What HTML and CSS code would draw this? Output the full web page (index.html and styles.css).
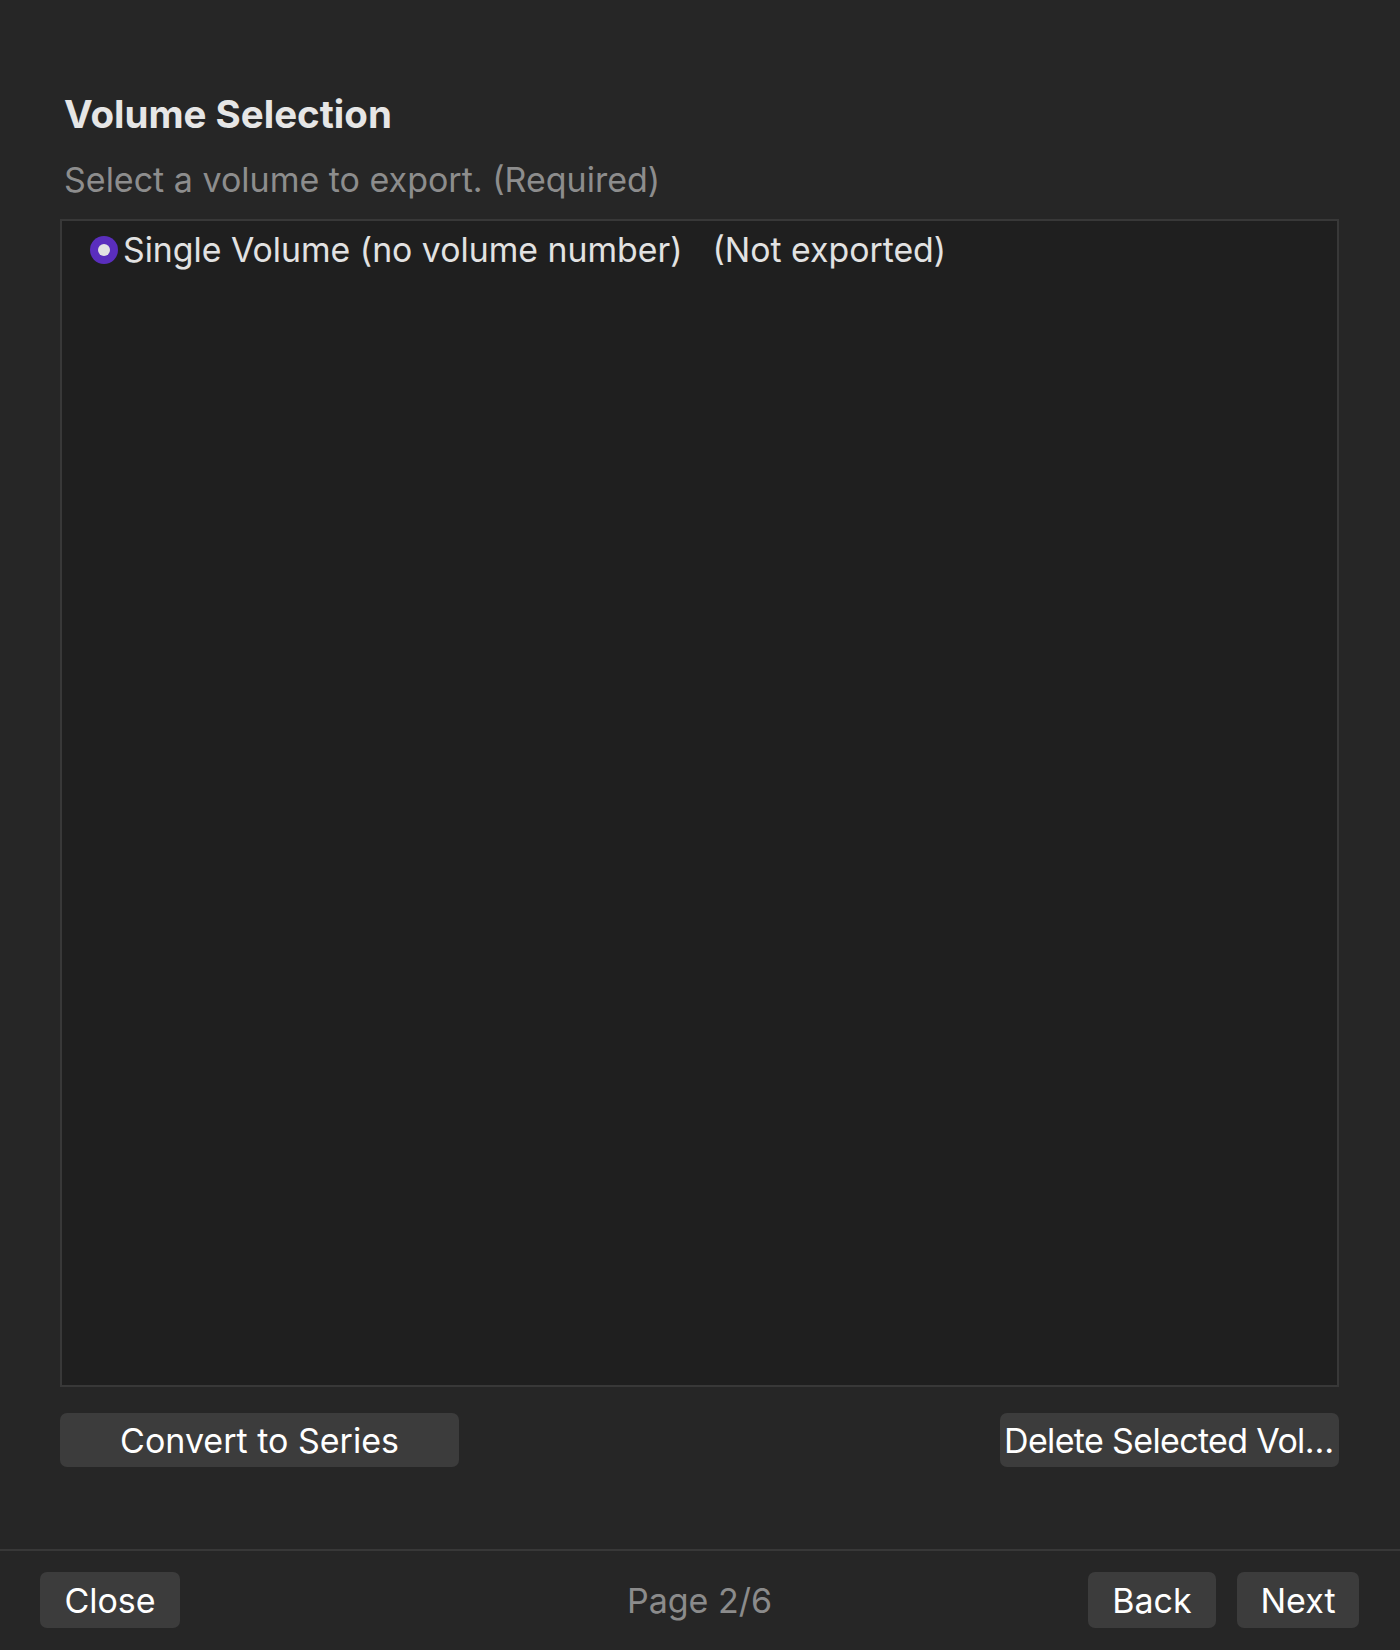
FILE: index.html
```html
<!DOCTYPE html>
<html lang="en">
<head>
    <meta charset="UTF-8">
    <meta name="viewport" content="width=device-width, initial-scale=1.0">
    <title>Export Wizard</title>
    <link rel="stylesheet" href="styles.css">
</head>
<body>
    <div class="wizard">
        <main class="step">
            <h1 class="step-title">Volume Selection</h1>
            <p class="step-hint">Select a volume to export. (Required)</p>

            <div class="volume-list">
                <label class="volume-row">
                    <span class="radio checked"></span>
                    <span class="volume-name">Single Volume (no volume number)</span>
                    <span class="volume-state">(Not exported)</span>
                </label>
            </div>

            <div class="list-actions">
                <button class="btn btn-convert">Convert to Series</button>
                <button class="btn btn-delete">Delete Selected Vol…</button>
            </div>
        </main>

        <footer class="nav-bar">
            <div class="nav-left">
                <button class="btn btn-nav btn-close">Close</button>
            </div>
            <span class="page-count">Page 2/6</span>
            <div class="nav-right">
                <button class="btn btn-nav btn-back">Back</button>
                <button class="btn btn-nav btn-next">Next</button>
            </div>
        </footer>
    </div>
</body>
</html>
```

FILE: styles.css
```css
* {
    box-sizing: border-box;
}
body {
    margin: 0;
    background-color: #262626;
    font-family: Inter, "Noto Sans", sans-serif;
    color: #e4e4e4;
}
.wizard {
    display: flex;
    flex-direction: column;
    height: 100vh;
}
.step {
    flex: 1;
    display: flex;
    flex-direction: column;
    padding: 92px 61px 82px 60px;
}
.step-title {
    margin: 0;
    padding-left: 4px;
    font-size: 38.5px;
    line-height: 45px;
    font-weight: 700;
    color: #e6e6e6;
}
.step-hint {
    margin: 23px 0 19px;
    padding-left: 4px;
    font-size: 34px;
    line-height: 40px;
    color: #8d8d8d;
}
.volume-list {
    flex: 1;
    background-color: #1f1f1f;
    border: 2px solid #383838;
    padding: 9px 28px;
}
.volume-row {
    display: flex;
    align-items: center;
    font-size: 33.8px;
    line-height: 40px;
    color: #e2e2e2;
}
.radio {
    width: 28px;
    height: 28px;
    border-radius: 50%;
    background-color: #5a2ebd;
    display: flex;
    align-items: center;
    justify-content: center;
    margin-right: 5px;
}
.radio.checked::after {
    content: "";
    width: 12px;
    height: 12px;
    border-radius: 50%;
    background-color: #e2e2e2;
}
.volume-state {
    margin-left: 30px;
}
.list-actions {
    display: flex;
    justify-content: space-between;
    margin-top: 26px;
}
.btn {
    font-family: inherit;
    font-size: 34px;
    color: #ffffff;
    background-color: #3c3c3c;
    border: none;
    border-radius: 7px;
    height: 54px;
    padding: 0 6px;
    white-space: nowrap;
    cursor: pointer;
}
.btn-convert {
    width: 399px;
}
/* label is clipped by the app, squeeze it to fit */
.btn-delete {
    width: 339px;
    padding: 0 4px;
    text-align: left;
    letter-spacing: -0.65px;
    overflow: hidden;
}
.nav-bar {
    display: grid;
    grid-template-columns: 1fr auto 1fr;
    align-items: center;
    border-top: 2px solid #383838;
    padding: 21px 41px 22px 40px;
}
.btn-nav {
    height: 56px;
}
.btn-close {
    width: 140px;
}
.btn-back {
    width: 128px;
}
.btn-next {
    width: 122px;
}
.page-count {
    font-size: 34px;
    color: #8b8b8b;
}
.nav-right {
    display: flex;
    justify-content: flex-end;
    gap: 21px;
}
```
